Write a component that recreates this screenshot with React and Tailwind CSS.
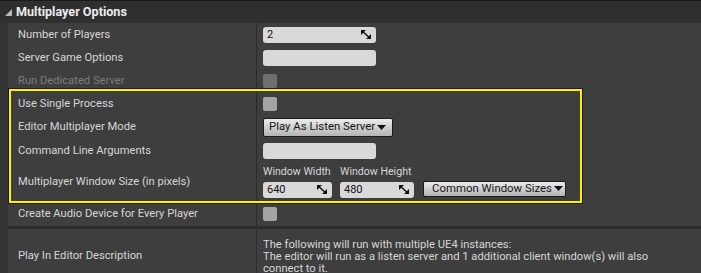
import React from "react";

function SpinIcon() {
  return (
    <svg width="10" height="9" viewBox="0 0 10 9" className="shrink-0">
      <polygon points="0,0 5,0 0,5" fill="#111" />
      <polygon points="10,9 10,4 5,9" fill="#111" />
      <polygon points="1,0 10,8 9,9 0,1" fill="#111" />
    </svg>
  );
}

function Arrow() {
  return (
    <svg width="9" height="5" viewBox="0 0 9 5" className="shrink-0 ml-[2px]">
      <polygon points="0,0 9,0 4.5,5" fill="#111" />
    </svg>
  );
}

function TextBox({ value, w = "w-[113px]", spin }) {
  return (
    <div className={`${w} h-[16px] bg-[#d9d9d9] rounded-[3px] flex items-center pl-[4px] pr-[5px] text-[#111] text-[11px] leading-none`}>
      <span className="flex-1">{value}</span>
      {spin && <SpinIcon />}
    </div>
  );
}

function Check({ disabled }) {
  return <div className={`w-[14px] h-[14px] rounded-[2px] ${disabled ? "bg-[#6e6e6e]" : "bg-[#a4a4a4]"}`} />;
}

function Combo({ label, w, h = "h-[19px]", pl = "pl-[5px]" }) {
  return (
    <div className={`${w} ${h} flex items-center justify-between ${pl} pr-[6px] rounded-[2px] border border-[#1c1c1c] bg-gradient-to-b from-[#ececec] to-[#b4b4b4] text-[#151515] text-[11.4px] leading-none whitespace-nowrap`}>
      <span>{label}</span>
      <Arrow />
    </div>
  );
}

function Row({ label, h, disabled, children, className = "" }) {
  return (
    <div className={`flex ${h} ${className}`}>
      <div className="w-[8px] bg-[#343434]" />
      <div className={`w-[248px] flex items-center pl-[10px] whitespace-nowrap ${disabled ? "text-[#7c7c7c]" : "text-[#d6d6d6]"}`}>
        {label}
      </div>
      <div className="w-[1px] bg-[#2c2c2c]" />
      <div className="flex-1 flex items-center pl-[6px]">{children}</div>
    </div>
  );
}

export default function App() {
  return (
    <div className="w-[701px] h-[273px] overflow-hidden bg-[#3e3e3e] text-[11.2px] leading-[12px]" style={{ fontFamily: "Roboto, 'Liberation Sans', sans-serif" }}>
      <div className="h-[23px] bg-[#2f2f2f] border-t border-[#1a1a1a] flex items-center">
        <svg width="7" height="7" viewBox="0 0 7 7" className="ml-[5px] mr-[4px]">
          <polygon points="7,0 7,7 0,7" fill="#b8b8b8" />
        </svg>
        <span className="font-bold text-[12.6px] text-[#ececec]">Multiplayer Options</span>
      </div>

      <Row label="Number of Players" h="h-[23px]">
        <TextBox value="2" spin />
      </Row>
      <Row label="Server Game Options" h="h-[23px]">
        <TextBox value="" />
      </Row>
      <Row label="Run Dedicated Server" h="h-[23px]" disabled>
        <Check disabled />
      </Row>

      <div className="relative">
        <Row label="Use Single Process" h="h-[23px]">
          <Check />
        </Row>
        <Row label="Editor Multiplayer Mode" h="h-[24px]">
          <Combo label="Play As Listen Server" w="w-[130px]" />
        </Row>
        <Row label="Command Line Arguments" h="h-[24px]">
          <TextBox value="" />
        </Row>
        <Row label="Multiplayer Window Size (in pixels)" h="h-[38px]">
          <div className="flex items-end gap-[8px] pb-[1px]">
            <div className="flex flex-col gap-[4px] w-[69px]">
              <span className="text-[#d6d6d6] whitespace-nowrap text-[10.6px]">Window Width</span>
              <TextBox value="640" w="w-[69px]" spin />
            </div>
            <div className="flex flex-col gap-[4px] w-[74px]">
              <span className="text-[#d6d6d6] whitespace-nowrap text-[10.6px]">Window Height</span>
              <TextBox value="480" w="w-[74px]" spin />
            </div>
            <div className="ml-[1px] mb-[1px]">
              <Combo label="Common Window Sizes" w="w-[143px]" h="h-[16px]" pl="pl-[8px]" />
            </div>
          </div>
        </Row>
        <div className="absolute left-[9px] top-[-3px] w-[573px] bottom-[-2px] border-2 border-[#fff200] pointer-events-none shadow-[0_0_0_1px_#1a1a1a]" />
      </div>

      <Row label="Create Audio Device for Every Player" h="h-[25px]">
        <Check />
      </Row>
      <div className="flex h-[3px]">
        <div className="w-[8px] bg-[#343434]" />
        <div className="flex-1 bg-[#2c2c2c]" />
      </div>
      <Row label="Play In Editor Description" h="h-[54px]">
        <div className="text-[#d6d6d6] leading-[12px] whitespace-nowrap pt-[2px]">
          <div>The following will run with multiple UE4 instances:</div>
          <div>The editor will run as a listen server and 1 additional client window(s) will also</div>
          <div>connect to it.</div>
        </div>
      </Row>
    </div>
  );
}
